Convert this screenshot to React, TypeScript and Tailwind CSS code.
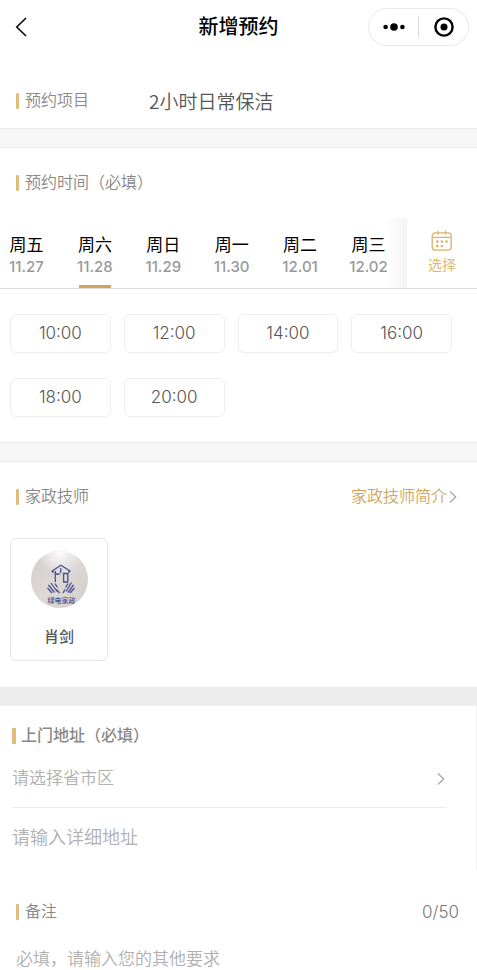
import { useState } from "react";

type Day = {
  week: string;
  date: string;
};

const days: Day[] = [
  { week: "周五", date: "11.27" },
  { week: "周六", date: "11.28" },
  { week: "周日", date: "11.29" },
  { week: "周一", date: "11.30" },
  { week: "周二", date: "12.01" },
  { week: "周三", date: "12.02" },
];

const slots = ["10:00", "12:00", "14:00", "16:00", "18:00", "20:00"];

const REMARK_MAX = 50;

function SectionLabel({ text, htmlFor }: { text: string; htmlFor?: string }) {
  const Tag = htmlFor ? "label" : "h2";
  return (
    <Tag htmlFor={htmlFor} className="flex items-center gap-[6px] text-base leading-6 font-[350] text-[#888]">
      <span className="h-4 w-[3px] rounded-[1px] bg-[#e0bd7c]" />
      {text}
    </Tag>
  );
}

function Divider() {
  return <div className="h-5 border-y border-[#ebebeb] bg-[#f6f6f6]" />;
}

function ChevronRight({ className }: { className?: string }) {
  return (
    <svg viewBox="0 0 8 14" className={className} fill="none" stroke="currentColor" strokeWidth="1.4">
      <path d="M1 1.5 6.6 7 1 12.5" />
    </svg>
  );
}

function CalendarIcon() {
  return (
    <svg viewBox="0 0 22 22" className="size-[22px]" fill="none" stroke="#d9b26b" strokeWidth="1.3">
      <rect x="1.2" y="2.8" width="19" height="17.4" rx="3.2" />
      <path d="M1.2 7.3h19M7 .8v4M14.4 .8v4" />
      <g fill="#d9b26b" stroke="none">
        <circle cx="6.3" cy="11.6" r="1.3" />
        <circle cx="10.9" cy="11.6" r="1.3" />
        <circle cx="15.5" cy="11.6" r="1.3" />
        <circle cx="6.3" cy="16" r="1.3" />
        <circle cx="10.9" cy="16" r="1.3" />
      </g>
    </svg>
  );
}

function Avatar() {
  return (
    <svg viewBox="0 0 57 57" className="size-[57px] rounded-full" role="img" aria-label="肖剑">
      <defs>
        <linearGradient id="wall" x1="0" y1="0" x2="1" y2="1">
          <stop offset="0" stopColor="#d3cecb" />
          <stop offset="0.5" stopColor="#dcd8d5" />
          <stop offset="1" stopColor="#d2ceca" />
        </linearGradient>
        <radialGradient id="lamp" cx="0.5" cy="0" r="0.4">
          <stop offset="0" stopColor="#fff" />
          <stop offset="1" stopColor="#fff" stopOpacity="0" />
        </radialGradient>
      </defs>
      <rect width="57" height="57" fill="url(#wall)" />
      <rect width="57" height="57" fill="url(#lamp)" />
      <g fill="none" stroke="#4a4f94" strokeWidth="1.3">
        <path d="M20.5 20.5 29.8 14.3 39.5 20.2M22 19.8v2.2M38 19.5v2.5" />
        <path d="M24.3 20v11M24.3 23h4.5M29.7 17v5M32.6 22.5h4.2v8.5h-4.2z" />
        <path d="M16.5 37l4.5 5M17.5 34l6 7.5M20 32l6 8.5M24 32.5l2.500 4M25.5 38.5l3 3.5" />
        <path d="M43.5 37l-4.5 5M42.5 34l-5.5 7.5M40.5 31.5l-5.5 9M37 32.5l-2.5 4M34 38.5l-2 3.5" />
      </g>
      <text
        x="30.5"
        y="51.8"
        textAnchor="middle"
        className="fill-[#4a4f94] text-[7px] font-medium"
      >
        绿电家政
      </text>
    </svg>
  );
}

export default function App() {
  const [day, setDay] = useState("11.28");
  const [slot, setSlot] = useState<string | null>(null);
  const [address, setAddress] = useState("");
  const [remark, setRemark] = useState("");

  return (
    <div className="min-h-screen bg-white font-['Liberation_Sans','Noto_Sans_CJK_SC',sans-serif]">
      <header className="grid h-[54px] grid-cols-[1fr_auto_1fr] items-center px-2">
        <button aria-label="返回" className="justify-self-start pl-[6px]">
          <svg viewBox="0 0 14 22" className="h-[22px] w-[14px]" fill="none" stroke="#111" strokeWidth="1.7">
            <path d="M12 2 2.8 11 12 20" />
          </svg>
        </button>
        <h1 className="text-xl font-medium text-black">新增预约</h1>
        <div className="flex h-[38px] w-[101px] items-center justify-self-end rounded-full border border-[#e8e8e8]">
          <button aria-label="更多" className="grid flex-1 place-items-center">
            <svg viewBox="0 0 22 8" className="h-2 w-[22px]">
              <circle cx="2.6" cy="4" r="2.3" />
              <circle cx="11" cy="4" r="3.8" />
              <circle cx="19.4" cy="4" r="2.3" />
            </svg>
          </button>
          <span className="h-[22px] w-px bg-[#ddd]" />
          <button aria-label="关闭" className="grid flex-1 place-items-center">
            <svg viewBox="0 0 20 20" className="size-5">
              <circle cx="10" cy="10" r="8.6" fill="none" stroke="#000" strokeWidth="2.4" />
              <circle cx="10" cy="10" r="3.5" />
            </svg>
          </button>
        </div>
      </header>

      <main>
        <section className="flex h-[74px] items-center px-4 pt-5">
          <div className="w-[133px]">
            <SectionLabel text="预约项目" />
          </div>
          <p className="font-['Noto_Sans_CJK_SC',sans-serif] text-[19px] leading-[22px] font-[350] text-[#555]">
            2小时日常保洁
          </p>
        </section>

        <Divider />

        <section>
          <div className="px-4 pt-[23px]">
            <SectionLabel text="预约时间（必填）" />
          </div>

          <div className="mt-[23px] flex h-[71px] border-b border-[#ddd]">
            <div className="relative flex flex-1 justify-between pr-[18px] pl-[6px]">
              {days.map((d) => (
                <button
                  key={d.date}
                  onClick={() => setDay(d.date)}
                  className="flex w-[41px] flex-col items-center pt-4"
                >
                  <span className="text-[17px] leading-6 text-black">{d.week}</span>
                  <span className="font-['Inter',sans-serif] text-[15px] leading-[18px] font-medium text-[#999]">
                    {d.date}
                  </span>
                  {d.date === day && <span className="mt-auto h-[3px] w-8 bg-[#cfa65c]" />}
                </button>
              ))}
              <span className="pointer-events-none absolute inset-y-0 right-0 w-5 bg-linear-to-r from-white/0 to-[#f3f3f3]" />
            </div>
            <button className="flex w-[70px] flex-col items-center pt-3 text-[#d9b26b]">
              <CalendarIcon />
              <span className="mt-[3px] text-sm leading-5 font-[350]">选择</span>
            </button>
          </div>

          <div className="grid grid-cols-4 gap-x-[13px] gap-y-[25px] pt-[25px] pr-[25px] pb-[25px] pl-[10px]">
            {slots.map((s) => (
              <button
                key={s}
                onClick={() => setSlot(s)}
                className={`h-[39px] rounded-md border font-['Inter',sans-serif] text-[17px] font-[350] text-[#555] ${
                  s === slot ? "border-[#cfa65c]" : "border-[#eee]"
                }`}
              >
                {s}
              </button>
            ))}
          </div>
        </section>

        <Divider />

        <section className="pb-[26px]">
          <div className="flex items-center justify-between px-4 pt-[23px] pr-5">
            <SectionLabel text="家政技师" />
            <a href="#staff" className="flex items-center gap-[2px] text-base leading-6 font-[350] text-[#cfa65c]">
              家政技师简介
              <ChevronRight className="h-[14px] w-2 text-[#aaa]" />
            </a>
          </div>
          <button className="mt-[29px] ml-[10px] flex h-[123px] w-[98px] flex-col items-center rounded-md border border-[#e6e6e6] pt-3">
            <Avatar />
            <span className="mt-[17px] text-[15px] leading-6 font-medium text-[#555]">肖剑</span>
          </button>
        </section>

        <div className="h-[19px] bg-[#ededed]" />

        <section className="border-r border-[#f3f3f3] pr-[29px] pb-[2px] pl-3">
          <label
            htmlFor="address"
            className="flex items-center gap-[5px] pt-[18px] text-base leading-6 font-medium text-[#888]"
          >
            <span className="h-4 w-1 bg-[#e0bd7c]" />
            上门地址（必填）
          </label>
          <button className="flex h-[60px] w-full items-center justify-between border-b border-[#ebebeb] pt-[2px] pr-[2px] text-[17px] font-[350] text-[#b0b0b0]">
            请选择省市区
            <ChevronRight className="h-[14px] w-2 text-[#aaa]" />
          </button>
          <input
            id="address"
            value={address}
            onChange={(e) => setAddress(e.target.value)}
            placeholder="请输入详细地址"
            className="block h-[60px] w-full text-lg font-[350] text-[#444] outline-none placeholder:text-[#b0b0b0]"
          />
        </section>

        <section className="px-4 pt-[30px]">
          <div className="flex items-center justify-between pr-[2px]">
            <SectionLabel text="备注" htmlFor="remark" />
            <span className="font-['Inter',sans-serif] text-[17px] leading-6 font-light text-[#777]">
              {remark.length}/{REMARK_MAX}
            </span>
          </div>
          <textarea
            id="remark"
            rows={1}
            maxLength={REMARK_MAX}
            value={remark}
            onChange={(e) => setRemark(e.target.value)}
            placeholder="必填，请输入您的其他要求"
            className="mt-6 block h-6 w-full resize-none text-[17px] leading-6 font-[350] text-[#444] outline-none placeholder:text-[#b0b0b0]"
          />
        </section>
      </main>
    </div>
  );
}
